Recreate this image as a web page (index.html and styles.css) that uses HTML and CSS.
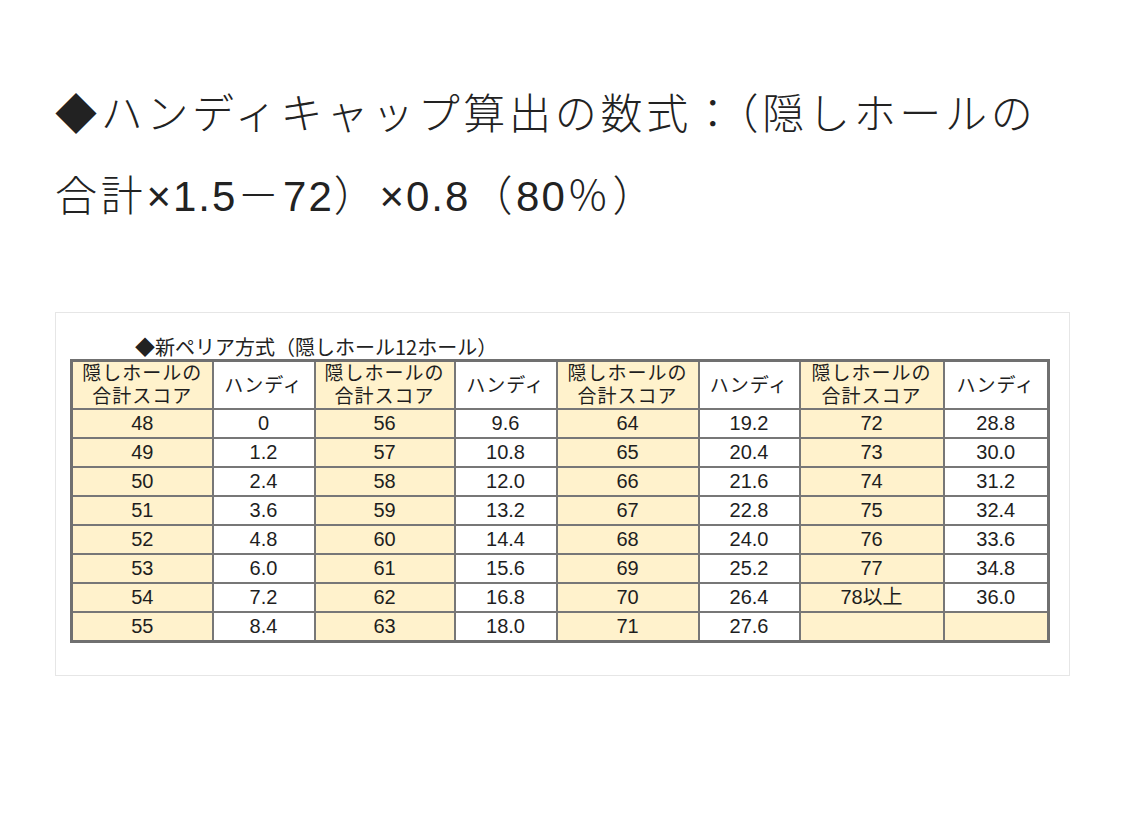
FILE: index.html
```html
<!DOCTYPE html>
<html lang="ja">
<head>
<meta charset="utf-8">
<title>新ペリア方式</title>
<link rel="stylesheet" href="styles.css">
</head>
<body>
<main class="page">
  <h1 class="title">◆ハンディキャップ算出の数式：（隠しホールの合計<span class="num">×1.5</span>－<span class="num">72</span>）<span class="num">×0.8</span>（<span class="num">80</span>％）</h1>
  <figure class="sheet">
    <div class="caption">◆新ペリア方式（隠しホール12ホール）</div>
    <table class="grid">
      <colgroup>
        <col class="c-score"><col class="c-handi">
        <col class="c-score2"><col class="c-handi">
        <col class="c-score3"><col class="c-handi2">
        <col class="c-score4"><col class="c-handi3">
      </colgroup>
      <thead>
        <tr>
          <th class="sc">隠しホールの<br>合計スコア</th><th class="hd">ハンディ</th>
          <th class="sc">隠しホールの<br>合計スコア</th><th class="hd">ハンディ</th>
          <th class="sc">隠しホールの<br>合計スコア</th><th class="hd">ハンディ</th>
          <th class="sc">隠しホールの<br>合計スコア</th><th class="hd">ハンディ</th>
        </tr>
      </thead>
      <tbody>
        <tr><td class="sc">48</td><td>0</td><td class="sc">56</td><td>9.6</td><td class="sc">64</td><td>19.2</td><td class="sc">72</td><td>28.8</td></tr>
        <tr><td class="sc">49</td><td>1.2</td><td class="sc">57</td><td>10.8</td><td class="sc">65</td><td>20.4</td><td class="sc">73</td><td>30.0</td></tr>
        <tr><td class="sc">50</td><td>2.4</td><td class="sc">58</td><td>12.0</td><td class="sc">66</td><td>21.6</td><td class="sc">74</td><td>31.2</td></tr>
        <tr><td class="sc">51</td><td>3.6</td><td class="sc">59</td><td>13.2</td><td class="sc">67</td><td>22.8</td><td class="sc">75</td><td>32.4</td></tr>
        <tr><td class="sc">52</td><td>4.8</td><td class="sc">60</td><td>14.4</td><td class="sc">68</td><td>24.0</td><td class="sc">76</td><td>33.6</td></tr>
        <tr><td class="sc">53</td><td>6.0</td><td class="sc">61</td><td>15.6</td><td class="sc">69</td><td>25.2</td><td class="sc">77</td><td>34.8</td></tr>
        <tr><td class="sc">54</td><td>7.2</td><td class="sc">62</td><td>16.8</td><td class="sc">70</td><td>26.4</td><td class="sc">78以上</td><td>36.0</td></tr>
        <tr><td class="sc">55</td><td>8.4</td><td class="sc">63</td><td>18.0</td><td class="sc">71</td><td>27.6</td><td class="sc"></td><td class="sc"></td></tr>
      </tbody>
    </table>
  </figure>
</main>
</body>
</html>
```

FILE: styles.css
```css
html, body {
  margin: 0;
  padding: 0;
  background: #ffffff;
}

.page {
  padding: 74px 55px 0 55px;
}

.title {
  margin: 0;
  font-family: "Liberation Sans", "Noto Sans CJK JP", sans-serif;
  font-weight: 300;
  font-size: 42px;
  line-height: 82px;
  color: #222222;
  letter-spacing: 3.7px;
}

.title .num {
  letter-spacing: 2px;
}

.sheet {
  margin: 74px 0 0 0;
  border: 1px solid #e6e6e6;
  padding: 22px 22px 32px 14px;
  background: #ffffff;
}

.caption {
  font-family: "Noto Sans CJK JP", sans-serif;
  font-size: 20px;
  line-height: 24px;
  color: #222222;
  padding-left: 65px;
}

.grid {
  border-collapse: collapse;
  table-layout: fixed;
  width: 977px;
  border: 3px solid #707070;
  font-family: "Liberation Sans", "Noto Sans CJK JP", sans-serif;
  color: #1e1e1e;
}

.c-score { width: 141px; }
.c-score2 { width: 140px; }
.c-score3 { width: 142px; }
.c-score4 { width: 144px; }
.c-handi { width: 102px; }
.c-handi2 { width: 101px; }
.c-handi3 { width: 105px; }

.grid th,
.grid td {
  border: 2px solid #777777;
  padding: 0;
  text-align: center;
  background: #ffffff;
}

.grid th {
  height: 46px;
  font-family: "Liberation Sans", "Noto Sans CJK JP", sans-serif;
  font-weight: 400;
  font-size: 19px;
  line-height: 23px;
  letter-spacing: 1px;
}

.grid td {
  height: 27px;
  font-size: 20px;
  line-height: 27px;
}

.grid .sc {
  background: #fff2cc;
}
```
